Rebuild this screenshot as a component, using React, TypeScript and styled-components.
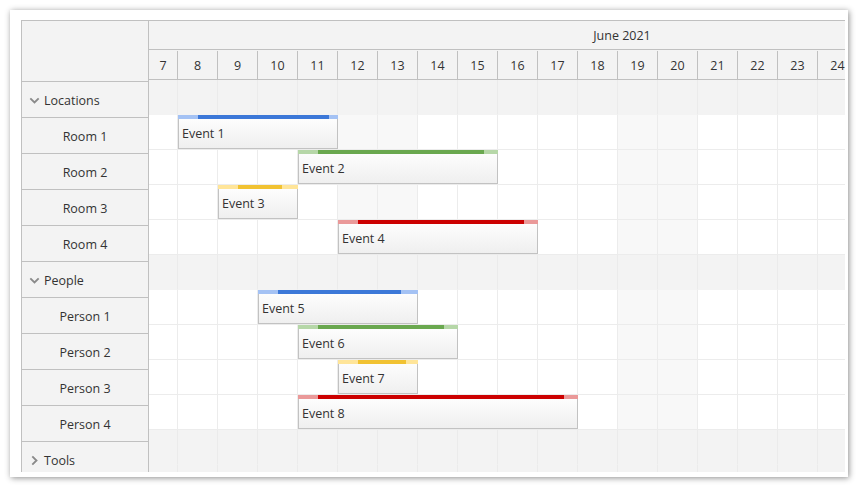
import React from "react";
import styled, { createGlobalStyle } from "styled-components";

const Global = createGlobalStyle`
  body { margin: 0; background: #fff; font-family: "Open Sans", "Noto Sans", sans-serif; }
`;

const Page = styled.div`
  padding: 10px 12px 10px 10px;
  width: 860px;
  height: 487px;
  box-sizing: border-box;
`;
const Frame = styled.div`
  background: #fff;
  box-shadow: 1px 1px 6px rgba(0,0,0,0.45);
  height: 467px;
  box-sizing: border-box;
  padding: 10px 3px 6px 11px;
`;
const Scheduler = styled.div`
  display: flex;
  height: 100%;
  overflow: hidden;
  border-top: 1px solid #c0c0c0;
  border-left: 1px solid #c0c0c0;
  font-size: 12.5px;
  color: #333;
`;
const LeftCol = styled.div`
  width: 126px;
  flex: none;
  background: #f3f3f3;
  border-right: 1px solid #c0c0c0;
`;
const Corner = styled.div`
  height: 60px;
  border-bottom: 1px solid #c0c0c0;
`;
const RowHead = styled.div<{ $group?: boolean }>`
  height: 34px;
  padding-top: 1px;
  border-bottom: 1px solid #c0c0c0;
  display: flex;
  align-items: center;
  justify-content: ${p => (p.$group ? "flex-start" : "center")};
  padding-left: ${p => (p.$group ? "7px" : "0")};
  gap: 4px;
`;
const Timeline = styled.div`
  flex: 1;
  overflow: hidden;
  min-width: 0;
`;
const Month = styled.div`
  height: 29px;
  padding-top: 1px;
  box-sizing: border-box;
  border-bottom: 1px solid #c0c0c0;
  background: #f3f3f3;
  display: flex;
  align-items: center;
  justify-content: center;
  width: 1240px;
  margin-left: -147px;
`;
const Days = styled.div`
  display: flex;
  height: 30px;
  padding-top: 1px;
  box-sizing: border-box;
  border-bottom: 1px solid #c0c0c0;
  background: #f3f3f3;
`;
const DayCell = styled.div<{ $w: number }>`
  width: ${p => p.$w}px;
  flex: none;
  box-sizing: border-box;
  border-right: 1px solid #c0c0c0;
  display: flex;
  align-items: center;
  justify-content: center;
`;
const Row = styled.div<{ $group?: boolean }>`
  position: relative;
  display: flex;
  height: 35px;
  background: ${p => (p.$group ? "#f3f3f3" : "#fff")};
`;
const Cell = styled.div<{ $w: number; $we: boolean; $group?: boolean }>`
  width: ${p => p.$w}px;
  flex: none;
  box-sizing: border-box;
  border-right: 1px solid ${p => (p.$group ? "#ebebeb" : "#ececec")};
  border-bottom: 1px solid ${p => (p.$group ? "#f3f3f3" : "#ececec")};
  background: ${p => (p.$group ? "transparent" : p.$we ? "#f8f8f8" : "#fff")};
`;
const Event = styled.div`
  position: absolute;
  top: 0;
  height: 34px;
  box-sizing: border-box;
  border: 1px solid #c2c2c2;
  border-top: none;
  background: linear-gradient(#ffffff, #efefef);
  z-index: 2;
`;
const Bar = styled.div<{ $light: string }>`
  height: 4px;
  background: ${p => p.$light};
  position: relative;
  margin: 0 -1px;
`;
const BarFill = styled.div<{ $c: string }>`
  position: absolute;
  top: 0;
  bottom: 0;
  background: ${p => p.$c};
`;
const EventText = styled.div`
  padding: 6px 0 0 3px;
`;

const days = Array.from({ length: 18 }, (_, i) => 7 + i);
const width = (d: number) => (d === 7 ? 29 : 40);
const weekend = (d: number) => d === 12 || d === 13 || d === 19 || d === 20;
const x = (d: number) => 29 + (d - 8) * 40;

const C = {
  blue: ["#3c78d8", "#a4c2f4"],
  green: ["#6aa84f", "#b6d7a8"],
  yellow: ["#f1c232", "#ffe599"],
  red: ["#cc0000", "#ea9999"],
};

type Ev = { name: string; from: number; to: number; d0: number; d1: number; c: keyof typeof C };
type R = { name: string; group?: boolean; open?: boolean; ev?: Ev };

const rows: R[] = [
  { name: "Locations", group: true, open: true },
  { name: "Room 1", ev: { name: "Event 1", from: 8, to: 12, d0: 20, d1: 151, c: "blue" } },
  { name: "Room 2", ev: { name: "Event 2", from: 11, to: 16, d0: 20, d1: 186, c: "green" } },
  { name: "Room 3", ev: { name: "Event 3", from: 9, to: 11, d0: 20, d1: 64, c: "yellow" } },
  { name: "Room 4", ev: { name: "Event 4", from: 12, to: 17, d0: 20, d1: 186, c: "red" } },
  { name: "People", group: true, open: true },
  { name: "Person 1", ev: { name: "Event 5", from: 10, to: 14, d0: 20, d1: 143, c: "blue" } },
  { name: "Person 2", ev: { name: "Event 6", from: 11, to: 15, d0: 20, d1: 146, c: "green" } },
  { name: "Person 3", ev: { name: "Event 7", from: 12, to: 14, d0: 20, d1: 68, c: "yellow" } },
  { name: "Person 4", ev: { name: "Event 8", from: 11, to: 18, d0: 20, d1: 266, c: "red" } },
  { name: "Tools", group: true, open: false },
  { name: "", group: true },
];

const Chevron = ({ open }: { open: boolean }) => (
  <svg width="11" height="11" viewBox="0 0 10 10" style={{ transform: open ? "none" : "rotate(-90deg)" }}>
    <path d="M1.2 3 L5 6.8 L8.8 3" fill="none" stroke="#8a8a8a" strokeWidth="1.7" />
  </svg>
);

export default function App() {
  return (
    <Page>
      <Global />
      <Frame>
        <Scheduler>
          <LeftCol>
            <Corner />
            {rows.map((r, i) => (
              <RowHead key={i} $group={r.group}>
                {r.group && r.name && <Chevron open={!!r.open} />}
                {r.name}
              </RowHead>
            ))}
          </LeftCol>
          <Timeline>
            <Month>June 2021</Month>
            <Days>
              {days.map(d => (
                <DayCell key={d} $w={width(d)}>{d}</DayCell>
              ))}
            </Days>
            {rows.map((r, i) => (
              <Row key={i} $group={r.group}>
                {days.map(d => (
                  <Cell key={d} $w={width(d)} $we={weekend(d)} $group={r.group} />
                ))}
                {r.ev && (
                  <Event style={{ left: x(r.ev.from), width: x(r.ev.to) - x(r.ev.from) }}>
                    <Bar $light={C[r.ev.c][1]}>
                      <BarFill $c={C[r.ev.c][0]} style={{ left: r.ev.d0, width: r.ev.d1 - r.ev.d0 }} />
                    </Bar>
                    <EventText>{r.ev.name}</EventText>
                  </Event>
                )}
              </Row>
            ))}
          </Timeline>
        </Scheduler>
      </Frame>
    </Page>
  );
}
